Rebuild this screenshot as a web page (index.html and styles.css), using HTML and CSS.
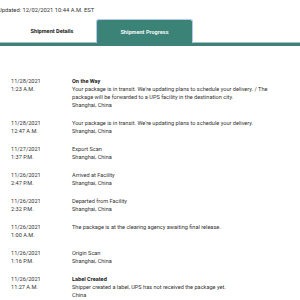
FILE: index.html
```html
<!DOCTYPE html>
<html>
<head>
<meta charset="utf-8">
<link rel="stylesheet" href="styles.css">
</head>
<body>
<div class="updated">Updated: 12/02/2021 10:44 A.M. EST</div>
<div class="tabs">
  <div class="tab">Shipment Details</div>
  <div class="tab active">Shipment Progress</div>
</div>
<div class="events">
  <div class="event">
    <div class="when"><div>11/28/2021</div><div>1:23 A.M.</div></div>
    <div class="what"><div class="title">On the Way</div><div>Your package is in transit. We're updating plans to schedule your delivery. / The package will be forwarded to a UPS facility in the destination city.</div><div>Shanghai, China</div></div>
  </div>
  <div class="event">
    <div class="when"><div>11/28/2021</div><div>12:47 A.M.</div></div>
    <div class="what"><div>Your package is in transit. We're updating plans to schedule your delivery.</div><div>Shanghai, China</div></div>
  </div>
  <div class="event">
    <div class="when"><div>11/27/2021</div><div>1:37 P.M.</div></div>
    <div class="what"><div>Export Scan</div><div>Shanghai, China</div></div>
  </div>
  <div class="event">
    <div class="when"><div>11/26/2021</div><div>2:47 P.M.</div></div>
    <div class="what"><div>Arrived at Facility</div><div>Shanghai, China</div></div>
  </div>
  <div class="event">
    <div class="when"><div>11/26/2021</div><div>2:32 P.M.</div></div>
    <div class="what"><div>Departed from Facility</div><div>Shanghai, China</div></div>
  </div>
  <div class="event">
    <div class="when"><div>11/26/2021</div><div>1:00 A.M.</div></div>
    <div class="what"><div>The package is at the clearing agency awaiting final release.</div></div>
  </div>
  <div class="event">
    <div class="when"><div>11/26/2021</div><div>1:16 P.M.</div></div>
    <div class="what"><div>Origin Scan</div><div>Shanghai, China</div></div>
  </div>
  <div class="event">
    <div class="when"><div>11/26/2021</div><div>11:27 A.M.</div></div>
    <div class="what"><div class="title">Label Created</div><div>Shipper created a label, UPS has not received the package yet.</div><div>China</div></div>
  </div>
</div>
</body>
</html>
```
FILE: styles.css
```css
html, body {
  margin: 0;
  padding: 0;
  background: #fff;
}
body {
  font-family: Roboto, "Liberation Sans", sans-serif;
  font-size: 5.6px;
  line-height: 8px;
  color: #333;
  overflow: hidden;
  width: 300px;
  height: 300px;
}
.updated {
  margin-left: -2px;
  padding-top: 6px;
  height: 13px;
  font-size: 5.8px;
}
.tabs {
  display: flex;
  padding-left: 8px;
  border-bottom: 3px solid #3f8079;
  box-shadow: 0 -1px 0 #9fc3bd inset;
  height: 24px;
}
.tab {
  width: 88px;
  display: flex;
  align-items: center;
  justify-content: center;
  font-weight: 700;
  font-size: 5.6px;
  color: #222;
}
.tab.active {
  width: 97px;
  background: #3b8277;
  color: #f2f7f6;
  border: 1.5px solid #b4c8f4;
  border-bottom: none;
  border-radius: 3px 3px 0 0;
  box-sizing: border-box;
}
.events {
  padding: 31px 0 0 11px;
  display: flex;
  flex-direction: column;
  gap: 10px;
}
.event {
  display: grid;
  grid-template-columns: 61px 1fr;
}
.what {
  padding-right: 12px;
}
.title {
  font-weight: 700;
  color: #222;
}
```
